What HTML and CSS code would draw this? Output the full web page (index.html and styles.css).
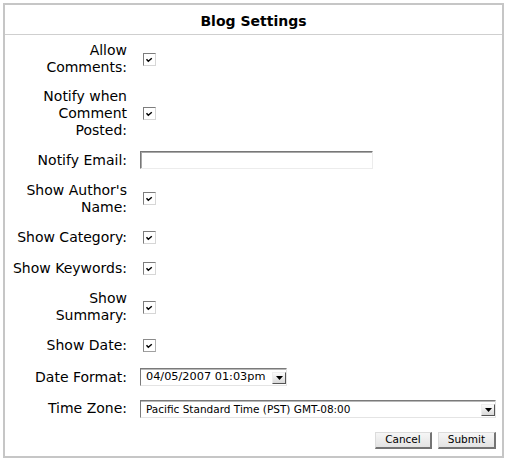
FILE: index.html
```html
<!DOCTYPE html>
<html lang="en">
<head>
<meta charset="utf-8">
<title>Blog Settings</title>
<link rel="stylesheet" href="styles.css">
</head>
<body>
<div class="panel">
  <h1 class="panel-title">Blog Settings</h1>
  <form class="settings">
    <div class="field-label">Allow<br>Comments:</div>
    <div class="field-control"><span class="checkbox" role="checkbox" aria-checked="true"><svg viewBox="0 0 11 11" width="11" height="11"><polyline points="2.5,5.2 4.3,7.3 7.8,4.2" /></svg></span></div>

    <div class="field-label">Notify when<br>Comment<br>Posted:</div>
    <div class="field-control"><span class="checkbox" role="checkbox" aria-checked="true"><svg viewBox="0 0 11 11" width="11" height="11"><polyline points="2.5,5.2 4.3,7.3 7.8,4.2" /></svg></span></div>

    <div class="field-label">Notify Email:</div>
    <div class="field-control"><input class="text-input" type="text"></div>

    <div class="field-label">Show Author's<br>Name:</div>
    <div class="field-control"><span class="checkbox" role="checkbox" aria-checked="true"><svg viewBox="0 0 11 11" width="11" height="11"><polyline points="2.5,5.2 4.3,7.3 7.8,4.2" /></svg></span></div>

    <div class="field-label">Show Category:</div>
    <div class="field-control"><span class="checkbox" role="checkbox" aria-checked="true"><svg viewBox="0 0 11 11" width="11" height="11"><polyline points="2.5,5.2 4.3,7.3 7.8,4.2" /></svg></span></div>

    <div class="field-label">Show Keywords:</div>
    <div class="field-control"><span class="checkbox" role="checkbox" aria-checked="true"><svg viewBox="0 0 11 11" width="11" height="11"><polyline points="2.5,5.2 4.3,7.3 7.8,4.2" /></svg></span></div>

    <div class="field-label">Show<br>Summary:</div>
    <div class="field-control"><span class="checkbox" role="checkbox" aria-checked="true"><svg viewBox="0 0 11 11" width="11" height="11"><polyline points="2.5,5.2 4.3,7.3 7.8,4.2" /></svg></span></div>

    <div class="field-label">Show Date:</div>
    <div class="field-control"><span class="checkbox checkbox-full" role="checkbox" aria-checked="true"><svg viewBox="0 0 11 11" width="11" height="11"><polyline points="2.5,5.2 4.3,7.3 7.8,4.2" /></svg></span></div>

    <div class="field-label">Date Format:</div>
    <div class="field-control">
      <span class="select select-date">
        <select><option>04/05/2007 01:03pm</option></select>
        <span class="select-arrow"><svg viewBox="0 0 7 4" width="7" height="4"><polygon points="0,0 7,0 3.5,4" /></svg></span>
      </span>
    </div>

    <div class="field-label">Time Zone:</div>
    <div class="field-control">
      <span class="select select-zone">
        <select><option>Pacific Standard Time (PST) GMT-08:00</option></select>
        <span class="select-arrow"><svg viewBox="0 0 7 4" width="7" height="4"><polygon points="0,0 7,0 3.5,4" /></svg></span>
      </span>
    </div>

    <div class="field-control actions">
      <button type="button" class="button">Cancel</button>
      <button type="submit" class="button">Submit</button>
    </div>
  </form>
</div>
</body>
</html>
```

FILE: styles.css
```css
html, body {
  margin: 0;
  background: #ffffff;
}

body {
  font-family: "DejaVu Sans", Verdana, sans-serif;
  color: #000000;
}

.panel {
  box-sizing: border-box;
  width: 501px;
  margin: 3px;
  border: 2px solid #c6c6c6;
}

.panel-title {
  margin: 0;
  padding-top: 3px;
  line-height: 26px;
  font-size: 14px;
  font-weight: bold;
  text-align: center;
  border-bottom: 1px solid #cfcfcf;
}

.settings {
  display: grid;
  grid-template-columns: 122px 1fr;
  column-gap: 13px;
  padding: 1px 6px 0 0;
  font-size: 14px;
  line-height: 17px;
}

.field-label,
.field-control {
  display: flex;
  align-items: center;
  min-height: 20px;
  padding: 6px 0 5.5px;
}

.field-label {
  justify-content: flex-end;
  text-align: right;
  white-space: nowrap;
}

.checkbox {
  box-sizing: border-box;
  display: flex;
  align-items: center;
  justify-content: center;
  width: 13px;
  height: 13px;
  margin-left: 3px;
  border: 1px solid;
  border-color: #7d7d7d #d6d6d6 #d6d6d6 #7d7d7d;
  background: #ffffff;
}

.checkbox-full {
  border-color: #8a8a8a #b0b0b0 #a0a0a0 #8a8a8a;
}

.checkbox polyline {
  fill: none;
  stroke: #000000;
  stroke-width: 1.4;
}

.text-input {
  box-sizing: border-box;
  width: 233px;
  height: 18px;
  margin: 0;
  padding: 0 3px;
  border: 1px solid;
  border-color: #777777 #ececec #ececec #777777;
  box-shadow: inset 1px 1px 0 #a8a8a8;
  background: #ffffff;
  font-family: inherit;
  font-size: 11px;
}

.select {
  position: relative;
  display: block;
}

.select-date {
  width: 147px;
}

.select-zone {
  width: 100%;
}

.select select {
  appearance: none;
  -webkit-appearance: none;
  box-sizing: border-box;
  display: block;
  width: 100%;
  height: 18px;
  margin: 0;
  padding: 0 18px 0 5px;
  border: 1px solid;
  border-color: #7a7a7a #e4e4e4 #e4e4e4 #7a7a7a;
  box-shadow: inset 0 1px 0 #b8b8b8;
  border-radius: 0;
  background: #ffffff;
  color: #000000;
  font-family: inherit;
  line-height: 16px;
}

.select-date select {
  font-size: 11.3px;
}

.select-zone select {
  font-size: 10.5px;
}

.select-arrow {
  position: absolute;
  right: 1px;
  top: 4px;
  box-sizing: border-box;
  display: flex;
  align-items: center;
  justify-content: center;
  width: 14px;
  height: 12px;
  border: 1px solid;
  border-color: #eeeeee #555555 #555555 #eeeeee;
  background: linear-gradient(#fbfbfb, #d9d9d9);
  pointer-events: none;
}

.select-arrow polygon {
  fill: #000000;
}

.actions {
  grid-column: 2;
  justify-content: flex-end;
  gap: 6px;
}

.button {
  box-sizing: border-box;
  height: 17px;
  margin: 0;
  padding: 0 9px;
  border-style: solid;
  border-width: 1px 2px 2px 1px;
  border-color: #dcdcdc #747474 #747474 #dcdcdc;
  border-radius: 0;
  background: linear-gradient(#f6f6f6, #e3e3e3);
  color: #000000;
  font-family: inherit;
  font-size: 10.5px;
  line-height: 13px;
}
```
